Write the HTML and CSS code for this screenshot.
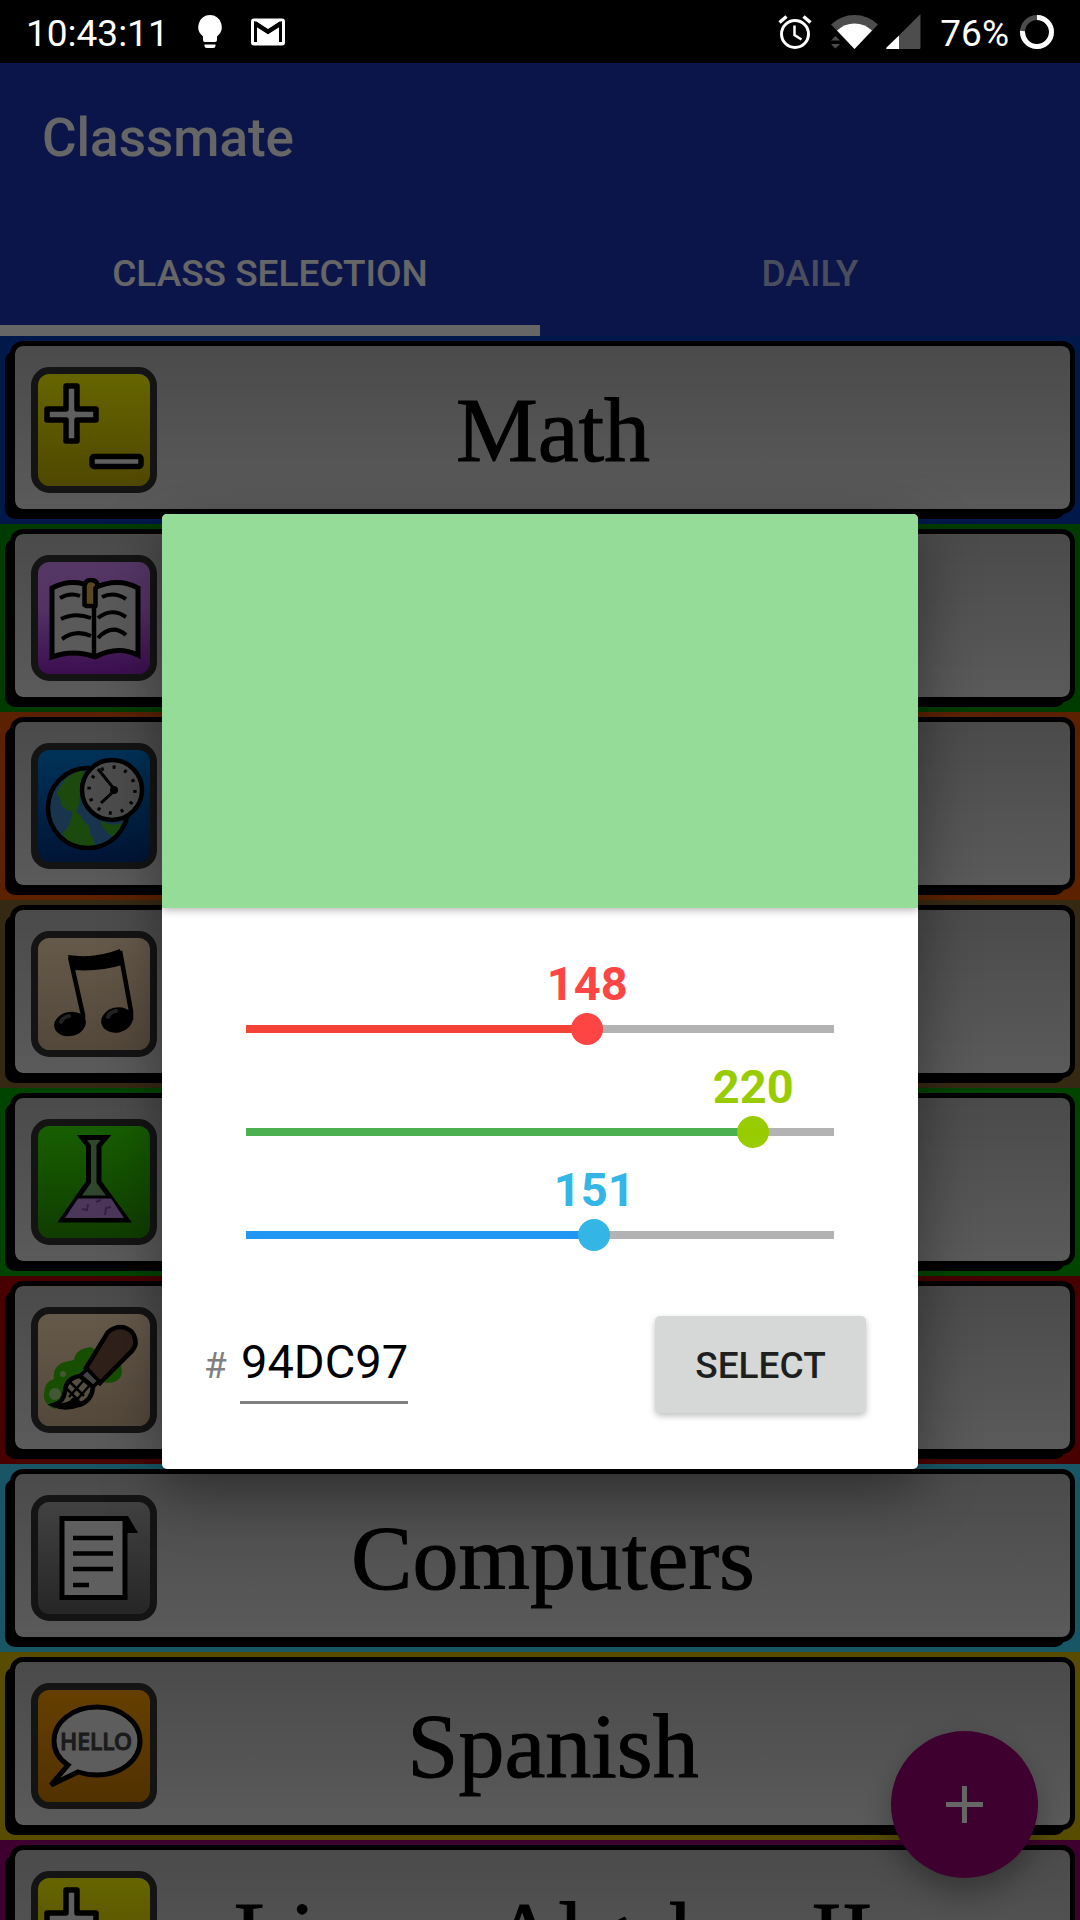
FILE: index.html
```html
<!DOCTYPE html>
<html lang="en">
<head>
<meta charset="utf-8">
<meta name="viewport" content="width=device-width, initial-scale=1">
<title>Classmate</title>
<link rel="stylesheet" href="styles.css">
</head>
<body>
<svg class="defs" width="0" height="0" aria-hidden="true">
  <defs>
    <linearGradient id="g-yellow" x2="0" y2="1"><stop stop-color="#ffff00"/><stop offset="1" stop-color="#c4b200"/></linearGradient>
    <linearGradient id="g-purple" x2="0" y2="1"><stop stop-color="#d68cff"/><stop offset=".4" stop-color="#d080fa"/><stop offset="1" stop-color="#9420c8"/></linearGradient>
    <linearGradient id="g-blue" x2="0" y2="1"><stop stop-color="#0082e0"/><stop offset="1" stop-color="#003284"/></linearGradient>
    <linearGradient id="g-tan" x2="0" y2="1"><stop stop-color="#ffe1bb"/><stop offset="1" stop-color="#cfb292"/></linearGradient>
    <linearGradient id="g-green" x2="0" y2="1"><stop stop-color="#3cf000"/><stop offset="1" stop-color="#289600"/></linearGradient>
    <linearGradient id="g-grey" x2="0" y2="1"><stop stop-color="#a6a6a6"/><stop offset="1" stop-color="#5e5e5e"/></linearGradient>
    <linearGradient id="g-orange" x2="0" y2="1"><stop stop-color="#ffa000"/><stop offset="1" stop-color="#c87a00"/></linearGradient>
    <clipPath id="globe-clip"><circle cx="57" cy="65" r="40"/></clipPath>
    <symbol id="math" viewBox="0 0 126 126">
      <rect x="3.500" y="3.500" width="119" height="119" rx="15" fill="url(#g-yellow)" stroke="#333" stroke-width="7"/>
      <path d="M35 19h11v23h19v11h-19v21h-11v-21h-19v-11h19z" fill="#eee" stroke="#000" stroke-width="5.500" stroke-linejoin="round"/>
      <rect x="61" y="89.500" width="49" height="10" rx="2" fill="#eee" stroke="#000" stroke-width="5.500"/>
    </symbol>
  </defs>
</svg>

<div class="screen">
  <header class="status">
    <time class="status-text">10:43:11</time>
    <svg class="bulb" width="24" height="34" viewBox="0 0 24 34" fill="#fff"><path d="M12 0a12 12 0 0 0-7 21.500V25q0 2 2 2h10q2 0 2-2v-3.500A12 12 0 0 0 12 0zM6.500 29.500h11v1q0 2.500-2.500 2.500H9q-2.500 0-2.500-2.500z"/></svg>
    <svg class="mail" width="34" height="28" viewBox="0 0 34 28"><rect width="34" height="27" y=".5" rx="3" fill="#fff"/><path d="M4.500 24V6L17 14.500 29.500 6v18" fill="none" stroke="#000" stroke-width="3"/><path d="M3 3.500h2.500L17 11 28.500 3.500H31v4L17 16 3 7.500z" fill="#000"/><path d="M5.500 3h23L17 10.500z" fill="#fff"/></svg>
    <span class="spacer"></span>
    <svg class="alarm" width="34" height="34" viewBox="0 0 34 34" fill="none" stroke="#fff"><circle cx="17" cy="19" r="13.500" stroke-width="3"/><path d="M16.500 10.500V20l7 4.500" stroke-width="2.500"/><path d="M1.500 7.500 8.500 1.500M32.500 7.500l-7-6" stroke-width="3.500"/></svg>
    <svg class="wifi" width="47" height="34" viewBox="0 0 47 34"><path d="M23.500 34 0 9.500Q10 0 23.500 0T47 9.500z" fill="#4d4d4d"/><path d="M23.500 34 6 15.500Q13.500 8.500 23.500 8.500T41 15.500z" fill="#fff"/><path d="M0 20h10v14H0z" fill="#000"/><path d="M0 25.500 4.500 21 9 25.500zM0 29h9L4.500 33.500z" fill="#4d4d4d"/></svg>
    <svg class="cell" width="35" height="35" viewBox="0 0 35 35"><path d="M34.500 0v33.500q0 1.500-1.500 1.500H13V21.500z" fill="#4d4d4d"/><path d="M13 21.500V35H1q-1.500-.5-.500-1.500z" fill="#fff"/></svg>
    <span class="status-text battery">76%</span>
    <svg class="ring" width="34" height="34" viewBox="0 0 34 34" fill="none" stroke-width="5"><circle cx="17" cy="17" r="14.500" stroke="#4d4d4d"/><path d="M17 2.500A14.500 14.500 0 1 1 2.500 16" stroke="#fff"/></svg>
  </header>

  <div class="stage">
    <div class="app">
      <div class="appbar">
        <h1 class="title">Classmate</h1>
        <nav class="tabs">
          <a class="tab tab-active" href="#classes">CLASS SELECTION</a>
          <a class="tab" href="#daily">DAILY</a>
        </nav>
      </div>
      <ul class="classes" id="classes">
        <li class="row row-blue"><div class="card">
          <svg class="icon" viewBox="0 0 126 126"><use href="#math"/></svg>
          <span class="name">Math</span>
        </div></li>
        <li class="row row-green"><div class="card">
          <svg class="icon" viewBox="0 0 126 126" role="img" aria-label="Book">
            <rect x="3.500" y="3.500" width="119" height="119" rx="15" fill="url(#g-purple)" stroke="#333" stroke-width="7"/>
            <path d="M21 33Q42 22 63 33 87 22 107 33V100Q86 90 64 102 43 94 21 102z" fill="#e2e2e2" stroke="#000" stroke-width="5"/>
            <path d="M63 33V101" stroke="#000" stroke-width="4.500"/>
            <path d="M29 43q10-6 20-2M30 64q14-7 30-1M31 84q14-10 29-3M71 42q12-6 24 2M67 63q14-11 28-1M67 83q14-15 28-3" fill="none" stroke="#000" stroke-width="4"/>
            <path d="M53.500 50V31q1-6 6-6 7 0 7 6l-2 2v18h-9z" fill="#dfb24e" stroke="#000" stroke-width="4.500" stroke-linejoin="round"/>
          </svg>
        </div></li>
        <li class="row row-orange"><div class="card">
          <svg class="icon" viewBox="0 0 126 126" role="img" aria-label="Globe and clock">
            <rect x="3.500" y="3.500" width="119" height="119" rx="15" fill="url(#g-blue)" stroke="#333" stroke-width="7"/>
            <circle cx="57" cy="65" r="40" fill="#3c86c0"/>
            <g clip-path="url(#globe-clip)" fill="#48ba24"><path d="M56 22 34 36 25 51q5 3 5 11 7 7 11 6 1 6-2 10-2 9-8 12l10 14 24 3q-2-12-6-16 0-9-6-12-4-9-8-10 4-6 3-16 6-14 4-24zM69 78q8 3 13 4l16-3-8 12-8 3q-9-6-13-16z"/></g>
            <circle cx="57" cy="65" r="40" fill="none" stroke="#000" stroke-width="4.500"/>
            <circle cx="81" cy="47" r="30" fill="#bdbdbd" stroke="#000" stroke-width="4.500"/>
            <circle cx="81" cy="47" r="23" fill="none" stroke="#111" stroke-width="3.500" stroke-dasharray="3 9.040"/>
            <path d="M67 26 84 47 70 60" fill="none" stroke="#000" stroke-width="3"/><circle cx="83" cy="47" r="4"/>
          </svg>
        </div></li>
        <li class="row row-brown"><div class="card">
          <svg class="icon" viewBox="0 0 126 126" role="img" aria-label="Music notes">
            <rect x="3.500" y="3.500" width="119" height="119" rx="15" fill="url(#g-tan)" stroke="#333" stroke-width="7"/>
            <path d="M37 24Q64 28 89 18L91 34Q69 41 42 39z"/>
            <path d="M39 26 52 84V92M89 20l11 60v9" fill="none" stroke="#000" stroke-width="4.500"/>
            <ellipse cx="39" cy="93" rx="16" ry="12" transform="rotate(-12 39 93)"/><ellipse cx="86" cy="89" rx="16" ry="12.500" transform="rotate(-14 86 89)"/>
            <path d="M30 91q2-5 8-6M77 86q2-5 8-6" fill="none" stroke="#555" stroke-width="4" stroke-linecap="round"/>
          </svg>
        </div></li>
        <li class="row row-leaf"><div class="card">
          <svg class="icon" viewBox="0 0 126 126" role="img" aria-label="Flask">
            <rect x="3.500" y="3.500" width="119" height="119" rx="15" fill="url(#g-green)" stroke="#333" stroke-width="7"/>
            <path d="M51 18.500H75L68 27V63L96 101H31L57.500 63V27z" fill="#79ae71" stroke="#000" stroke-width="5"/>
            <path d="M48 78H79L93 99H34z" fill="#bd8ae0"/><path d="M46 78H80" stroke="#000" stroke-width="3"/>
            <path d="M51 90l5 1 1-6M74 96l1-7 5-1M65 83l5-2" fill="none" stroke="#8450aa" stroke-width="2"/>
          </svg>
        </div></li>
        <li class="row row-red"><div class="card">
          <svg class="icon" viewBox="0 0 126 126" role="img" aria-label="Paint brush">
            <rect x="3.500" y="3.500" width="119" height="119" rx="15" fill="url(#g-tan)" stroke="#333" stroke-width="7"/>
            <path d="M24 102Q12 98 13 86T23 72Q21 60 33 55L43 53Q44 42 60 40L90 58Q94 75 77 76L62 73z" fill="#3ac400"/>
            <circle cx="24" cy="87" r="6" fill="#a5dc83"/><circle cx="32" cy="67" r="3" fill="#a5dc83"/>
            <path d="M55 61 77 25Q90 15 101 25 109 37 99 46L69 76z" fill="#765142" stroke="#000" stroke-width="4.500"/>
            <path d="M56 62 68 74 62 80 49 69z" fill="#a5a5a5" stroke="#000" stroke-width="3.500"/>
            <path d="M49 69 62 80Q61 94 48 98 34 103 23 98 33 95 34 84 35 71 49 69z" fill="#d8c2a4" stroke="#000" stroke-width="4.500"/>
            <path d="M25 98q13 0 17-6l9 4q-12 6-26 2zM39 75l14 14M36 82l12 12M53 73 38 90M58 79 43 96" stroke="#000" stroke-width="2.500"/>
          </svg>
        </div></li>
        <li class="row row-cyan"><div class="card">
          <svg class="icon" viewBox="0 0 126 126" role="img" aria-label="Document">
            <rect x="3.500" y="3.500" width="119" height="119" rx="15" fill="url(#g-grey)" stroke="#333" stroke-width="7"/>
            <path d="M92 21h5l10 17H92z"/>
            <rect x="31" y="23.500" width="63" height="79" fill="#eee" stroke="#000" stroke-width="5"/>
            <path d="M42 43H82M42 58.500H82M42 74H82M42 90H58" stroke="#000" stroke-width="4.500"/>
          </svg>
          <span class="name">Computers</span>
        </div></li>
        <li class="row row-yellow"><div class="card">
          <svg class="icon" viewBox="0 0 126 126" role="img" aria-label="Speech bubble">
            <rect x="3.500" y="3.500" width="119" height="119" rx="15" fill="url(#g-orange)" stroke="#333" stroke-width="7"/>
            <path d="M37 82Q23 73 23 58C23 39 42 24 66 24S109 39 109 58 90 92 66 92Q56 92 47 89L20 102z" fill="#e8e8e8" stroke="#000" stroke-width="5"/>
            <text class="hello" x="65" y="67" text-anchor="middle">HELLO</text>
          </svg>
          <span class="name">Spanish</span>
        </div></li>
        <li class="row row-plum"><div class="card">
          <svg class="icon" viewBox="0 0 126 126"><use href="#math"/></svg>
          <span class="name">Linear Algebra II</span>
        </div></li>
      </ul>
      <button class="fab" type="button" aria-label="Add class"><svg width="37" height="37" viewBox="0 0 37 37"><path d="M18.500 0v37M0 18.500h37" stroke="#fff" stroke-width="5"/></svg></button>
    </div>

    <div class="scrim">
      <form class="dialog" role="dialog" aria-label="Color">
        <div class="swatch"></div>
        <div class="body">
          <div class="sliders">
            <div class="channel red" style="--level:58.04%">
              <output class="value" for="red">148</output>
              <input class="slider" id="red" type="range" min="0" max="255" value="148" aria-label="Red">
            </div>
            <div class="channel green" style="--level:86.27%">
              <output class="value" for="green">220</output>
              <input class="slider" id="green" type="range" min="0" max="255" value="220" aria-label="Green">
            </div>
            <div class="channel blue" style="--level:59.22%">
              <output class="value" for="blue">151</output>
              <input class="slider" id="blue" type="range" min="0" max="255" value="151" aria-label="Blue">
            </div>
          </div>
          <div class="actions">
            <label class="hash" for="hex">#</label>
            <input class="hex" id="hex" type="text" value="94DC97" maxlength="6" spellcheck="false">
            <button class="select" type="button">SELECT</button>
          </div>
        </div>
      </form>
    </div>
  </div>
</div>
</body>
</html>
```
FILE: styles.css
```css
* { box-sizing: border-box; }

body {
  margin: 0;
  background: #000;
  font-family: Roboto, "Liberation Sans", sans-serif;
}

.defs { position: absolute; }

.screen {
  display: flex;
  flex-direction: column;
  height: 100vh;
  overflow: hidden;
}

/* Status bar */
.status {
  display: flex;
  flex: none;
  align-items: center;
  height: 63px;
  padding: 0 26px;
  background: #000;
  color: #fff;
}
.status svg { flex: none; }
.status-text { font-size: 37px; line-height: 44px; margin-top: 4px; }
.bulb { margin-left: 29px; }
.mail { margin-left: 29px; }
.spacer { flex: 1; }
.wifi { margin-left: 19px; }
.cell { margin-left: 8px; }
.battery { margin-left: 19px; }
.ring { margin-left: 11px; }

/* Main screen and the dimming layer share one grid cell */
.stage {
  display: grid;
  flex: 1;
  min-height: 0;
}
.app, .scrim { grid-area: 1 / 1; min-height: 0; }

.app {
  position: relative;
  display: flex;
  flex-direction: column;
  overflow: hidden;
}

.appbar { flex: none; background: #2036b9; color: #fff; }
.title {
  margin: 0;
  padding: 4px 42px 0;
  font-size: 53px;
  font-weight: 500;
  line-height: 143px;
}
.tabs { display: grid; grid-template-columns: 1fr 1fr; }
.tab {
  height: 126px;
  border-bottom: 11px solid transparent;
  padding-top: 13px;
  color: rgba(255, 255, 255, 0.7);
  font-size: 37px;
  font-weight: 500;
  line-height: 102px;
  text-align: center;
  text-decoration: none;
}
.tab-active { border-color: #fff; color: #fff; }

/* Class list */
.classes { margin: 0; padding: 0; list-style: none; }
.row {
  position: relative;
  height: 188px;
  padding: 5px 5px 10px 10px;
}
.row::before {
  content: "";
  position: absolute;
  inset: 15px 15px 5px 5px;
  border-radius: 10px;
  background: #000;
}
.card {
  position: relative;
  display: grid;
  align-items: center;
  height: 100%;
  padding-left: 16px;
  border: 5px solid #000;
  border-radius: 13px;
  background: linear-gradient(#bababa, #e2e2e2) padding-box;
}
.icon, .name { grid-area: 1 / 1; }
.icon { width: 126px; height: 126px; margin-top: 5px; }
.name {
  padding: 4px 0 0 5px;
  color: #000;
  font-family: "Liberation Serif", serif;
  font-size: 92px;
  line-height: 120px;
  text-align: center;
  -webkit-text-stroke: 1px #000;
}
.hello {
  fill: #444;
  font-family: "Noto Sans", sans-serif;
  font-size: 23px;
  font-weight: 500;
  stroke: #444;
  stroke-width: 1px;
}

.row-blue { background: #003cb9; }
.row-green { background: #009600; }
.row-orange { background: #e65500; }
.row-brown { background: #876632; }
.row-leaf { background: #00aa00; }
.row-red { background: #b40000; }
.row-cyan { background: #3cd7ff; }
.row-yellow { background: #d9be00; }
.row-plum { background: #9b0073; }

.fab {
  position: absolute;
  right: 42px;
  bottom: 42px;
  display: grid;
  place-items: center;
  width: 147px;
  height: 147px;
  padding: 0;
  border: 0;
  border-radius: 50%;
  background: #9b0073;
  box-shadow: 0 14px 30px rgba(0, 0, 0, 0.3);
}

/* Color dialog */
.scrim {
  position: relative;
  display: grid;
  place-items: center;
  background: rgba(0, 0, 0, 0.6);
}
.dialog {
  width: 70%;
  overflow: hidden;
  border-radius: 5px;
  background: #fff;
  box-shadow: 0 20px 60px rgba(0, 0, 0, 0.4);
}
.swatch {
  height: 394px;
  background: #94dc97;
  box-shadow: 0 2px 8px rgba(0, 0, 0, 0.3);
}
.body { padding: 48px 52px 56px 42px; }
.sliders {
  display: grid;
  gap: 13px;
  padding: 0 16px 0 26px;
}
.channel { padding: 0 16px; }
.value {
  display: flex;
  justify-content: center;
  width: 0;
  margin-left: var(--level);
  color: var(--thumb);
  font-size: 47px;
  font-weight: 700;
  line-height: 56px;
}
.slider {
  display: block;
  width: calc(100% + 32px);
  height: 34px;
  margin: 0 -16px;
  appearance: none;
  background: linear-gradient(to right, var(--fill) var(--level), #b3b3b3 var(--level)) center / calc(100% - 32px) 8px no-repeat;
}
.slider::-webkit-slider-thumb {
  width: 32px;
  height: 32px;
  appearance: none;
  border-radius: 50%;
  background: var(--thumb);
}
.red { --fill: #f44336; --thumb: #ff4444; }
.green { --fill: #4caf50; --thumb: #99cc00; }
.blue { --fill: #2196f3; --thumb: #33b5e5; }

.actions {
  display: flex;
  align-items: baseline;
  margin-top: 64px;
}
.hash { width: 36px; color: #808080; font-size: 37px; }
.hex {
  width: 168px;
  height: 71px;
  padding: 0 0 12px 1px;
  border: 0;
  border-bottom: 3px solid #808080;
  background: none;
  color: #000;
  font-family: inherit;
  font-size: 47px;
  line-height: 56px;
}
.select {
  width: 211px;
  height: 97px;
  margin-left: auto;
  padding: 1px 0 0;
  border: 0;
  border-radius: 5px;
  background: #d6d8d7;
  box-shadow: 0 3px 6px rgba(0, 0, 0, 0.25);
  color: #1e1f1f;
  font-family: inherit;
  font-size: 37px;
  font-weight: 500;
}
```
